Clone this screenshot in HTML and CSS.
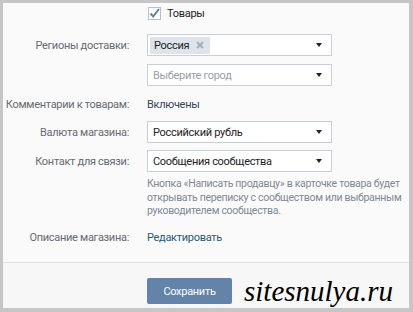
FILE: index.html
```html
<!DOCTYPE html>
<html lang="ru">
<head>
<meta charset="utf-8">
<link rel="stylesheet" href="styles.css">
</head>
<body>
<div class="frame">
  <div class="form">
    <div class="row row-check">
      <div class="label"></div>
      <div class="field">
        <span class="checkbox"><svg width="13" height="13" viewBox="0 0 13 13"><path d="M2.5 6.5 L5.2 9.5 L11 2" fill="none" stroke="#5e81a8" stroke-width="2"/></svg></span>
        <span class="check-text">Товары</span>
      </div>
    </div>
    <div class="row row-regions">
      <div class="label">Регионы доставки:</div>
      <div class="field">
        <div class="select">
          <span class="tag">Россия <svg class="tag-x" width="8" height="8" viewBox="0 0 8 8"><path d="M1 1 L7 7 M7 1 L1 7" stroke="#a6adb6" stroke-width="2"/></svg></span>
          <span class="arrow"></span>
        </div>
      </div>
    </div>
    <div class="row row-city">
      <div class="label"></div>
      <div class="field">
        <div class="select"><span class="placeholder">Выберите город</span><span class="arrow"></span></div>
      </div>
    </div>
    <div class="row row-comments">
      <div class="label">Комментарии к товарам:</div>
      <div class="field"><span class="value">Включены</span></div>
    </div>
    <div class="row row-currency">
      <div class="label">Валюта магазина:</div>
      <div class="field">
        <div class="select"><span class="text">Российский рубль</span><span class="arrow"></span></div>
      </div>
    </div>
    <div class="row row-contact">
      <div class="label">Контакт для связи:</div>
      <div class="field">
        <div class="select"><span class="text">Сообщения сообщества</span><span class="arrow"></span></div>
      </div>
    </div>
    <div class="row row-help">
      <div class="label"></div>
      <div class="field help">Кнопка «Написать продавцу» в карточке товара будет<br>открывать переписку с сообществом или выбранным<br>руководителем сообщества.</div>
    </div>
    <div class="row row-desc">
      <div class="label">Описание магазина:</div>
      <div class="field"><a class="link">Редактировать</a></div>
    </div>
  </div>
  <div class="footer">
    <button class="btn">Сохранить</button>
    <span class="watermark">sitesnulya.ru</span>
  </div>
</div>
</body>
</html>
```

FILE: styles.css
```css
* { box-sizing: border-box; }
html, body { margin: 0; }
body {
  background: #c6c6c6;
  font-family: Roboto, "Liberation Sans", sans-serif;
  font-size: 11px;
  letter-spacing: -0.3px;
  color: #222;
  padding: 3px 4px 4px 3px;
  height: 312px;
  overflow: hidden;
}
.frame {
  background: #fafafa;
  height: 305px;
  display: flex;
  flex-direction: column;
}
.form {
  padding-top: 3px;
}
.row {
  display: grid;
  grid-template-columns: 126px auto;
  column-gap: 18px;
  align-items: center;
}
.label {
  text-align: right;
  color: #656b72;
  white-space: nowrap;
}
.field { display: flex; align-items: center; }
.row-check .field { height: 14px; }
.checkbox {
  width: 13px; height: 13px;
  border: 1px solid #b8c0c9;
  background: #fff;
  display: inline-flex;
  margin-left: 1px;
}
.checkbox svg { display: block; margin: -1px; }
.check-text { margin-left: 6px; color: #222; }
.row-regions { margin-top: 14px; }
.row-city { margin-top: 8px; }
.row-comments { margin-top: 7px; height: 22px; }
.row-currency { margin-top: 6px; }
.row-contact { margin-top: 7px; }
.row-help { margin-top: 5px; align-items: start; }
.row-desc { margin-top: 9px; height: 22px; }
.select {
  width: 185px;
  height: 22px;
  border: 1px solid #c9cfd6;
  background: #fff;
  display: flex;
  align-items: center;
  padding: 0 9px 0 5px;
}
.select .text { color: #222; }
.placeholder { color: #9aa0a7; }
.arrow {
  margin-left: auto;
  width: 0; height: 0;
  border-left: 3.5px solid transparent;
  border-right: 3.5px solid transparent;
  border-top: 4px solid #222;
}
.tag {
  background: #dfe4ea;
  height: 17px;
  display: inline-flex;
  align-items: center;
  padding: 0 6px 0 4px;
  margin-left: -3px;
  color: #222;
}
.tag-x { margin-left: 7px; display: block; }
.value { color: #33465a; }
.help {
  color: #7f8995;
  font-size: 10.5px;
  line-height: 13.5px;
  display: block;
  white-space: nowrap;
}
.link { color: #2b587a; text-decoration: none; }
.footer {
  border-top: 1px solid #e1e1e1;
  background: #f7f7f7;
  margin-top: auto;
  height: 46px;
  display: flex;
  align-items: flex-start;
  padding-left: 144px;
  padding-top: 15px;
}
.btn {
  width: 85px;
  height: 26px;
  border: none;
  border-radius: 2px;
  background: #6383a8;
  color: #fff;
  font-family: inherit;
  font-size: 11px;
  letter-spacing: -0.3px;
  padding: 0;
}
.watermark {
  font-family: "Liberation Serif", serif;
  font-style: italic;
  font-size: 29px;
  letter-spacing: 0;
  color: #000;
  margin-left: 12px;
  line-height: 26px;
}
```
